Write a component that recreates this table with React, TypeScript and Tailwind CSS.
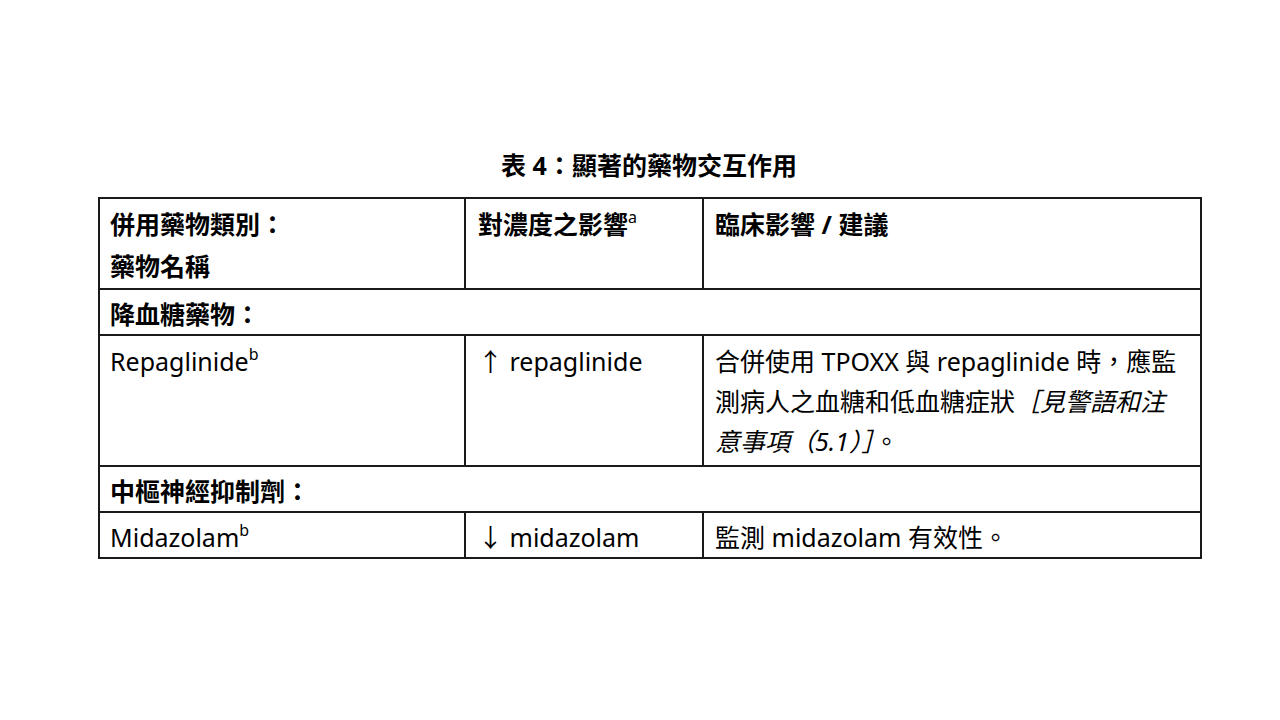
import React from "react";

const font = { fontFamily: '"Noto Sans", "Noto Sans CJK TC", sans-serif' };

export default function App() {
  return (
    <div lang="zh-TW" className="w-[1280px] h-[720px] bg-white text-black" style={font}>
      <div className="pt-[148px] pl-[98px]">
        <div className="w-[1102px] text-center text-[25px] leading-[34px] font-bold">
          表 4：顯著的藥物交互作用
        </div>
        <table className="mt-[15px] w-[1102px] border-collapse text-[25px] leading-[40px] table-fixed">
          <colgroup>
            <col className="w-[366px]" />
            <col className="w-[238px]" />
            <col className="w-[498px]" />
          </colgroup>
          <tbody>
            <tr>
              <td className="border-2 border-[#1a1a1a] align-top px-[10px] pt-[5px] pb-[2px] font-bold">
                <div>併用藥物類別：</div>
                <div className="mt-[2px]">藥物名稱</div>
              </td>
              <td className="border-2 border-[#1a1a1a] align-top px-[12px] pt-[5px] pb-[2px] font-bold">
                對濃度之影響<sup className="text-[16px] font-normal top-[-11px]">a</sup>
              </td>
              <td className="border-2 border-[#1a1a1a] align-top px-[11px] pt-[5px] pb-[2px] font-bold">
                臨床影響 / 建議
              </td>
            </tr>
            <tr>
              <td colSpan={3} className="border-2 border-[#1a1a1a] align-top px-[10px] pt-[5px] pb-0 leading-[39px] font-bold">
                降血糖藥物：
              </td>
            </tr>
            <tr>
              <td className="border-2 border-[#1a1a1a] align-top px-[10px] pt-[5px] pb-[4px]">
                Repaglinide<sup className="text-[16px] top-[-11px]">b</sup>
              </td>
              <td className="border-2 border-[#1a1a1a] align-top px-[12px] pt-[5px] pb-[4px]">
                ↑ repaglinide
              </td>
              <td className="border-2 border-[#1a1a1a] align-top px-[11px] pt-[5px] pb-[4px]">
                合併使用 TPOXX 與 repaglinide 時，應監測病人之血糖和低血糖症狀
                <span className="italic">［見警語和注意事項（5.1）］</span>。
              </td>
            </tr>
            <tr>
              <td colSpan={3} className="border-2 border-[#1a1a1a] align-top px-[10px] pt-[5px] pb-0 leading-[39px] font-bold">
                中樞神經抑制劑：
              </td>
            </tr>
            <tr>
              <td className="border-2 border-[#1a1a1a] align-top px-[10px] pt-[4px] pb-0">
                Midazolam<sup className="text-[16px] top-[-11px]">b</sup>
              </td>
              <td className="border-2 border-[#1a1a1a] align-top px-[12px] pt-[4px] pb-0">
                ↓ midazolam
              </td>
              <td className="border-2 border-[#1a1a1a] align-top px-[11px] pt-[4px] pb-0">
                監測 midazolam 有效性。
              </td>
            </tr>
          </tbody>
        </table>
      </div>
    </div>
  );
}
